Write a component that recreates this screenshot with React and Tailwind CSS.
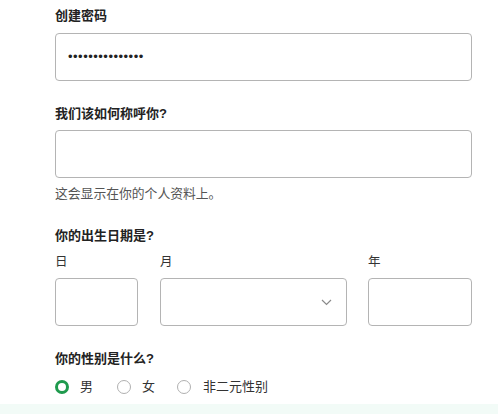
export default function App() {
  return (
    <div className="w-[500px] h-[414px] bg-white overflow-hidden relative font-['Liberation_Sans','Noto_Sans_CJK_SC',sans-serif] text-[#222]">
      <div className="flex flex-col pl-[55px] w-[472px] pt-[7px]">
        <div className="text-[13px] leading-[18px] font-bold">创建密码</div>
        <div className="mt-[8px] h-[48px] border border-[#b4b4b4] rounded-[4px] flex items-center pl-[12px]">
          <span className="text-[13px] tracking-[0.5px] text-[#222]">•••••••••••••••</span>
        </div>

        <div className="mt-[24px] text-[13px] leading-[18px] font-bold">我们该如何称呼你?</div>
        <div className="mt-[7px] h-[48px] border border-[#b4b4b4] rounded-[4px]"></div>
        <div className="mt-[7px] text-[12.8px] leading-[18px] text-[#555]">这会显示在你的个人资料上。</div>

        <div className="mt-[24px] text-[13px] leading-[18px] font-bold">你的出生日期是?</div>
        <div className="mt-[8px] flex">
          <div className="w-[83px] flex flex-col">
            <div className="text-[12.5px] leading-[18px] text-[#333]">日</div>
            <div className="mt-[7px] h-[48px] border border-[#b4b4b4] rounded-[4px]"></div>
          </div>
          <div className="ml-[22px] w-[187px] flex flex-col">
            <div className="text-[12.5px] leading-[18px] text-[#333]">月</div>
            <div className="mt-[7px] h-[48px] border border-[#b4b4b4] rounded-[4px] flex items-center justify-end pr-[14px]">
              <svg width="11" height="7" viewBox="0 0 11 7" fill="none">
                <path d="M1 1 L5.5 5.5 L10 1" stroke="#8a8a8a" strokeWidth="1.2" />
              </svg>
            </div>
          </div>
          <div className="ml-[21px] w-[104px] flex flex-col">
            <div className="text-[12.5px] leading-[18px] text-[#333]">年</div>
            <div className="mt-[7px] h-[48px] border border-[#b4b4b4] rounded-[4px]"></div>
          </div>
        </div>

        <div className="mt-[24px] text-[13px] leading-[18px] font-bold">你的性别是什么?</div>
        <div className="mt-[10px] flex items-center h-[18px] text-[13px] text-[#333]">
          <span className="w-[14px] h-[14px] rounded-full border-[3.5px] border-[#1f9a4d] box-border"></span>
          <span className="ml-[11px]">男</span>
          <span className="ml-[24px] w-[14px] h-[14px] rounded-full border border-[#b0b0b0] box-border"></span>
          <span className="ml-[11px]">女</span>
          <span className="ml-[22px] w-[14px] h-[14px] rounded-full border border-[#b0b0b0] box-border"></span>
          <span className="ml-[12px]">非二元性别</span>
        </div>
      </div>
      <div className="absolute left-0 top-[404px] w-[498px] h-[10px] bg-[#f2fbf7]"></div>
    </div>
  );
}
